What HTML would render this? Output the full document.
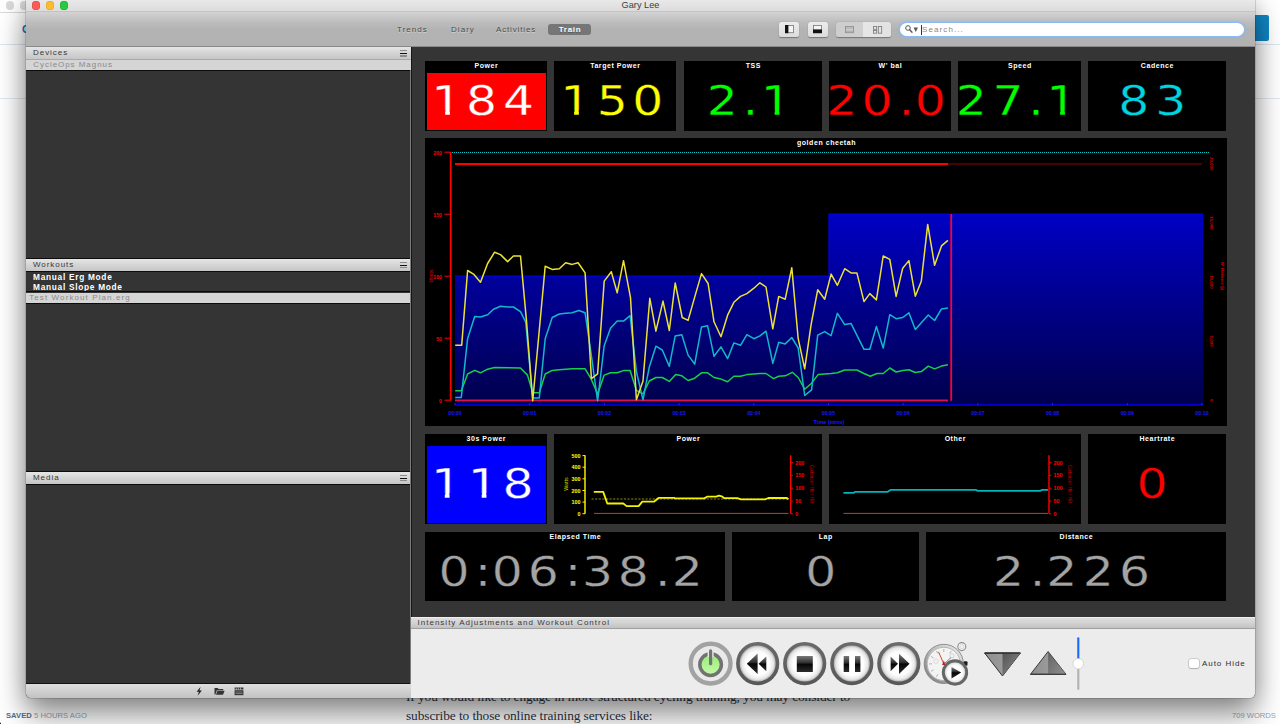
<!DOCTYPE html>
<html lang="en">
<head>
<meta charset="utf-8">
<title>Gary Lee</title>
<style>
*{box-sizing:border-box;margin:0;padding:0}
html,body{width:1280px;height:724px;overflow:hidden;background:#fff}
body{position:relative;font-family:"Liberation Sans",sans-serif;font-size:8px;color:#222}
.abs{position:absolute}
svg{display:block;overflow:visible}
svg text{font-family:"Liberation Sans",sans-serif}
/* background page */
#bgpage{position:absolute;left:0;top:0;width:1280px;height:724px;background:#fff}
#bgpage .ln{position:absolute;left:0;height:1px;background:#d5dde8}
#serif1,#serif2{position:absolute;left:406px;font-family:"Liberation Serif",serif;font-size:13.4px;color:#2b3245;white-space:nowrap;letter-spacing:-.1px}
#saved{position:absolute;left:6px;top:710.5px;font-size:7.6px;letter-spacing:.05px;color:#93a5bb;white-space:nowrap}
#saved b{color:#4f6f90}
#words{position:absolute;left:1232px;top:710.5px;font-size:7.6px;color:#93a5bb;white-space:nowrap}
/* window */
#win{position:absolute;left:26px;top:0;width:1229px;height:698px;background:#353535;border-radius:0 0 4.5px 4.5px;box-shadow:0 0 0 .5px rgba(0,0,0,.25),0 18px 30px rgba(0,0,0,.40),0 0 22px rgba(0,0,0,.22);overflow:hidden}
#titlebar{position:absolute;left:0;top:0;width:100%;height:12px;background:linear-gradient(#e9e9e9,#dcdcdc);border-bottom:1px solid #c4c4c4}
#title{position:absolute;left:0;width:100%;top:-.6px;text-align:center;font-size:9.2px;color:#3c3c3c;line-height:12px}
.tl{position:absolute;top:1px;width:8.6px;height:8.6px;border-radius:50%}
#toolbar{position:absolute;left:0;top:12px;width:100%;height:35px;background:linear-gradient(#d3d3d3 0,#bdbdbd 30%,#b3b3b3 52%,#b2b2b2 100%);border-bottom:1px solid #8a8a8a}
.tab{position:absolute;top:13px;font-size:8px;letter-spacing:1.05px;color:#4a4a4a;text-shadow:0 1px 0 rgba(255,255,255,.45);line-height:9px;white-space:nowrap}
#train{position:absolute;left:522px;top:12px;width:43px;height:11px;border-radius:3px;background:#767676;color:#fff;font-weight:bold;font-size:8px;letter-spacing:.7px;text-align:center;line-height:11.6px;text-shadow:0 1px 0 rgba(0,0,0,.3);padding-left:1px}
.tbtn{position:absolute;top:10px;height:15px;border-radius:2.5px;background:linear-gradient(#ececec,#dcdcdc);box-shadow:0 .5px 1px rgba(0,0,0,.35)}
#search{position:absolute;left:873.5px;top:10.5px;width:344px;height:13.6px;border-radius:7px;background:#fff;box-shadow:0 0 0 1px #8cbaf4,0 0 2.5px 1.5px rgba(130,180,245,.55)}
#search span{position:absolute;left:22.5px;top:2.2px;font-size:8px;letter-spacing:1.1px;color:#8a8a8a;line-height:9px}
/* left panel */
#left{position:absolute;left:0;top:47px;width:385px;height:651px;background:#343434}
.hdr{position:absolute;left:0;width:385px;background:linear-gradient(#e6e6e6,#d6d6d6 45%,#c6c6c6);font-size:8px;letter-spacing:.95px;color:#383838;padding-left:7px;white-space:nowrap}
.row{position:absolute;left:0;width:385px;background:#d5d5d5;font-size:8px;letter-spacing:.95px;color:#8a8a8a;white-space:nowrap}
.brow{position:absolute;left:7px;color:#fff;font-weight:bold;font-size:8.3px;letter-spacing:.72px;white-space:nowrap;line-height:10px}
.burger{position:absolute;left:374px;width:7px;height:6.5px}
.burger i{position:absolute;left:0;width:7px;height:1.3px;background:#8c8c8c}
#lfoot{position:absolute;left:0;top:636px;width:385px;height:15px;background:linear-gradient(#dedede,#c2c2c2);border-top:1px solid #111}
/* main */
#main{position:absolute;left:385px;top:47px;width:844px;height:651px;background:#353535;border-left:1.3px solid #161616}
.tile{position:absolute;background:#000}
.tile .lab{position:absolute;left:0;width:100%;top:.2px;text-align:center;color:#fff;font-weight:bold;font-size:7px;letter-spacing:.55px;line-height:9px;white-space:nowrap;padding-left:.7px}
.tile .fill{position:absolute}
.big{font-family:"DejaVu Sans","Liberation Sans",sans-serif;text-anchor:start}
.xt{font-size:5.2px;fill:#1818ff;text-anchor:middle;font-weight:bold}
.yt{font-size:5.2px;fill:#ff0000;text-anchor:end;font-weight:bold}
.yl{font-size:5.2px;fill:#e00000;text-anchor:middle}
.rl{font-size:4.4px;fill:#d80000;text-anchor:middle;font-weight:bold}
.ttl{font-size:7px;fill:#fff;font-weight:bold;text-anchor:middle;letter-spacing:.55px}
.myt{font-size:5.4px;fill:#ffff00;text-anchor:end;font-weight:bold}
.myl{font-size:5.4px;fill:#c8c800;text-anchor:middle}
.mrt{font-size:5.4px;fill:#ff0000;text-anchor:start;font-weight:bold}
.mrl{font-size:4.5px;fill:#d00000;text-anchor:middle}
/* controls */
#ctlhdr{position:absolute;left:385px;top:617px;width:844px;height:12px;background:linear-gradient(#dedede,#d2d2d2 50%,#c2c2c2);border-top:1px solid #efefef;border-bottom:1px solid #a0a0a0;font-size:8px;letter-spacing:1.01px;color:#383838;padding-left:6.5px;line-height:10px;white-space:nowrap}
#ctl{position:absolute;left:385px;top:629px;width:844px;height:69px;background:#ececec}
#autohide{position:absolute;left:791px;top:29.5px;font-size:8px;letter-spacing:.95px;color:#2e2e2e;line-height:10px;white-space:nowrap}
#chk{position:absolute;left:778px;top:29.5px;width:9.5px;height:9.5px;border-radius:2px;background:#fff;box-shadow:0 0 0 .6px #b4b4b4,0 .5px 1px rgba(0,0,0,.25)}
</style>
</head>
<body>
<div id="bgpage">
  <div class="ln" style="top:11.5px;width:40px;background:#d9d9d9"></div>
  <div class="ln" style="top:44px;width:1280px;background:#dde5f0"></div>
  <div class="ln" style="top:98px;width:1280px;background:#e3e8ef"></div>
  <div class="abs" style="left:5.7px;top:1px;width:8.6px;height:8.6px;border-radius:50%;background:#d9d9d9"></div>
  <div class="abs" style="left:19.7px;top:1px;width:8.6px;height:8.6px;border-radius:50%;background:#d9d9d9"></div>
  <div class="abs" style="left:22px;top:23px;font-size:11px;font-weight:bold;color:#1177c2">C</div>
  <div class="abs" style="left:1250px;top:15px;width:18.5px;height:26px;border-radius:2px;background:#1186c5"></div>
  <div id="serif1" style="top:689px">If you would like to engage in more structured cycling training, you may consider to</div>
  <div id="serif2" style="top:708px">subscribe to those online training services like:</div>
  <div id="saved"><b>SAVED</b> 5 HOURS AGO</div>
  <div id="words">709 WORDS</div>
  <div class="abs" style="left:-4px;top:720.5px;width:8px;height:8px;background:radial-gradient(circle at 100% 0,rgba(0,0,0,0) 0,rgba(0,0,0,0) 3.6px,#111 4.4px)"></div>
</div>

<div id="win">
  <div id="titlebar">
    <div class="tl" style="left:5.7px;background:#fc5b57;box-shadow:inset 0 0 0 .5px #e0443e"></div>
    <div class="tl" style="left:19.7px;background:#fdbc2e;box-shadow:inset 0 0 0 .5px #dea123"></div>
    <div class="tl" style="left:33.7px;background:#28c83f;box-shadow:inset 0 0 0 .5px #1aab29"></div>
    <div id="title">Gary Lee</div>
  </div>
  <div id="toolbar">
    <div class="tab" style="left:371px">Trends</div>
    <div class="tab" style="left:425px">Diary</div>
    <div class="tab" style="left:470px;letter-spacing:.85px">Activities</div>
    <div id="train">Train</div>
    <div class="tbtn" style="left:753px;width:20px">
      <svg class="abs" style="left:5.5px;top:3px" width="9" height="8.5"><rect x=".5" y=".5" width="8" height="7.2" fill="#f4f4f4" stroke="#777" stroke-width=".8"/><rect x="0" y="0" width="3.4" height="8.2" fill="#111"/></svg>
    </div>
    <div class="tbtn" style="left:781.5px;width:20px">
      <svg class="abs" style="left:5.5px;top:3px" width="9" height="8.5"><rect x=".5" y=".5" width="8" height="7.2" fill="#f4f4f4" stroke="#777" stroke-width=".8"/><rect x="0" y="4.4" width="9" height="3.8" fill="#111"/></svg>
    </div>
    <div class="tbtn" style="left:810px;width:55px;background:linear-gradient(90deg,#cdcdcd 0,#cfcfcf 26.5px,#b8b8b8 26.5px,#b8b8b8 27.2px,#e6e6e6 27.2px,#e2e2e2 100%)">
      <svg class="abs" style="left:8.5px;top:4px" width="9" height="7.5"><rect x=".5" y=".5" width="8" height="6.2" fill="none" stroke="#8a8a8a" stroke-width=".8"/><path d="M.5 2.1h8M.5 5.2h8" stroke="#8a8a8a" stroke-width=".6"/></svg>
      <svg class="abs" style="left:37px;top:3.5px" width="10" height="8"><rect x=".5" y=".5" width="3.2" height="2.8" fill="none" stroke="#777" stroke-width=".8"/><rect x=".5" y="4.4" width="3.2" height="2.8" fill="none" stroke="#777" stroke-width=".8"/><rect x="5.3" y=".5" width="3.4" height="6.7" fill="none" stroke="#777" stroke-width=".8"/></svg>
    </div>
    <div id="search">
      <svg class="abs" style="left:5.5px;top:2.8px" width="16" height="9"><circle cx="3" cy="3" r="2.3" fill="none" stroke="#555" stroke-width="1"/><path d="M4.7 4.8L7 7.3" stroke="#555" stroke-width="1.3" stroke-linecap="round"/><path d="M8.6 2.6h4.4l-2.2 4.4z" fill="#555"/></svg>
      <div class="abs" style="left:21.5px;top:2px;width:1px;height:10px;background:#333"></div>
      <span>Search...</span>
    </div>
  </div>

  <div id="left">
    <div class="hdr" style="top:0;height:11.5px;line-height:11.2px">Devices</div>
    <div class="burger" style="top:3.2px"><i style="top:0"></i><i style="top:2.6px;background:#111"></i><i style="top:5.2px"></i></div>
    <div class="abs" style="left:0;top:11.5px;width:385px;height:1.3px;background:#a9a9a9"></div>
    <div class="row" style="top:12.8px;height:10.2px;line-height:9px;padding-left:7.3px">CycleOps Magnus</div>
    <div class="abs" style="left:0;top:23px;width:385px;height:1px;background:#0c0c0c"></div>

    <div class="abs" style="left:0;top:210.5px;width:385px;height:1.5px;background:#0c0c0c"></div>
    <div class="hdr" style="top:212px;height:12px;line-height:12px">Workouts</div>
    <div class="burger" style="top:215px"><i style="top:0"></i><i style="top:2.6px;background:#111"></i><i style="top:5.2px"></i></div>
    <div class="abs" style="left:0;top:224px;width:385px;height:1px;background:#0c0c0c"></div>
    <div class="brow" style="top:225.2px">Manual Erg Mode</div>
    <div class="brow" style="top:235px">Manual Slope Mode</div>
    <div class="abs" style="left:0;top:244.3px;width:385px;height:1.2px;background:#0c0c0c"></div>
    <div class="row" style="top:245.5px;height:10.3px;line-height:10px;padding-left:3.2px;letter-spacing:1.1px">Test Workout Plan.erg</div>
    <div class="abs" style="left:0;top:255.8px;width:385px;height:1px;background:#0c0c0c"></div>

    <div class="abs" style="left:0;top:423.5px;width:385px;height:1.5px;background:#0c0c0c"></div>
    <div class="hdr" style="top:425px;height:12.3px;line-height:12px">Media</div>
    <div class="burger" style="top:428px"><i style="top:0"></i><i style="top:2.6px;background:#111"></i><i style="top:5.2px"></i></div>
    <div class="abs" style="left:0;top:437.3px;width:385px;height:1px;background:#0c0c0c"></div>

    <div id="lfoot">
      <svg class="abs" style="left:168px;top:1.5px" width="50" height="11">
        <path d="M6.6 .8L2.6 5.8h2.3L3.6 9.8l4.3-5.4H5.5z" fill="#222"/>
        <path d="M20.5 2h3.2l.9 1h4.6v1.2h-6.3l-1.5 4.4h-.9z" fill="#333"/><path d="M23.4 4.8h7.2l-1.6 3.9h-7z" fill="#333"/>
        <rect x="40.6" y="4.2" width="8.8" height="5" fill="#333"/><path d="M40.6 1.6h8.8v1.9h-8.8z" fill="#333"/><path d="M42.3 1.6v1.9M44.4 1.6v1.9M46.5 1.6v1.9" stroke="#ddd" stroke-width=".6"/><path d="M41.5 6h7M41.5 7.6h7" stroke="#ccc" stroke-width=".5"/>
      </svg>
    </div>
  </div>
  <div class="abs" style="left:384.3px;top:70px;width:1px;height:614px;background:#7c7c7c"></div>
  <div id="main"></div>
</div>

<!-- page-coordinate overlays (inside window region) -->
<div class="tile" style="left:425px;top:61px;width:122px;height:69.5px"><div class="lab">Power</div><div class="fill" style="background:#ff0000;left:2px;top:12px;right:1px;bottom:1px"></div></div>
<div class="tile" style="left:554px;top:61px;width:122px;height:69.5px"><div class="lab">Target Power</div></div>
<div class="tile" style="left:684px;top:61px;width:138px;height:69.5px"><div class="lab">TSS</div></div>
<div class="tile" style="left:829px;top:61px;width:122px;height:69.5px"><div class="lab">W' bal</div></div>
<div class="tile" style="left:958px;top:61px;width:123px;height:69.5px"><div class="lab">Speed</div></div>
<div class="tile" style="left:1088px;top:61px;width:138px;height:69.5px"><div class="lab">Cadence</div></div>
<div class="tile" style="left:425px;top:434px;width:122px;height:90px"><div class="lab">30s Power</div><div class="fill" style="background:#0000ff;left:2px;top:12px;right:1px;bottom:1px"></div></div>
<div class="tile" style="left:554px;top:434px;width:268px;height:90px"><div class="lab">Power</div></div>
<div class="tile" style="left:829px;top:434px;width:252px;height:90px"><div class="lab">Other</div></div>
<div class="tile" style="left:1088px;top:434px;width:138px;height:90px"><div class="lab">Heartrate</div></div>
<div class="tile" style="left:425px;top:532px;width:300px;height:69px"><div class="lab">Elapsed Time</div></div>
<div class="tile" style="left:732px;top:532px;width:187px;height:69px"><div class="lab">Lap</div></div>
<div class="tile" style="left:926px;top:532px;width:300px;height:69px"><div class="lab">Distance</div></div>
<svg class="abs" style="left:425px;top:138px" width="802" height="288" viewBox="0 0 802 288">
<defs><linearGradient id="bg1" x1="0" y1="0" x2="0" y2="1"><stop offset="0" stop-color="#0000c4"/><stop offset="1" stop-color="#00004c"/></linearGradient></defs>
<rect width="802" height="288" fill="#000"/>
<path d="M30.0 138.0 H404.0 V76.0 H778.0 V266.5 H30.0 Z" fill="url(#bg1)"/>
<path d="M30.0 138.0 H404.0 V76.0 H778.0" fill="none" stroke="#0000f0" stroke-width="1.2"/>
<path d="M30.0 267.0 H778.0" stroke="#0000ff" stroke-width="1.4"/>
<path d="M30.0 267.0 v-2" stroke="#2020ff" stroke-width="1"/>
<text x="30.0" y="277.0" class="xt">00:00</text>
<path d="M104.7 267.0 v-2" stroke="#2020ff" stroke-width="1"/>
<text x="104.7" y="277.0" class="xt">00:01</text>
<path d="M179.4 267.0 v-2" stroke="#2020ff" stroke-width="1"/>
<text x="179.4" y="277.0" class="xt">00:02</text>
<path d="M254.1 267.0 v-2" stroke="#2020ff" stroke-width="1"/>
<text x="254.1" y="277.0" class="xt">00:03</text>
<path d="M328.8 267.0 v-2" stroke="#2020ff" stroke-width="1"/>
<text x="328.8" y="277.0" class="xt">00:04</text>
<path d="M403.5 267.0 v-2" stroke="#2020ff" stroke-width="1"/>
<text x="403.5" y="277.0" class="xt">00:05</text>
<path d="M478.2 267.0 v-2" stroke="#2020ff" stroke-width="1"/>
<text x="478.2" y="277.0" class="xt">00:06</text>
<path d="M552.9 267.0 v-2" stroke="#2020ff" stroke-width="1"/>
<text x="552.9" y="277.0" class="xt">00:07</text>
<path d="M627.6 267.0 v-2" stroke="#2020ff" stroke-width="1"/>
<text x="627.6" y="277.0" class="xt">00:08</text>
<path d="M702.3 267.0 v-2" stroke="#2020ff" stroke-width="1"/>
<text x="702.3" y="277.0" class="xt">00:09</text>
<path d="M777.0 267.0 v-2" stroke="#2020ff" stroke-width="1"/>
<text x="777.0" y="277.0" class="xt">00:10</text>
<text x="404.0" y="286.0" class="xt" style="font-size:5.5px">Time (mins)</text>
<path d="M25.7 14.0 V262.5" stroke="#ff0000" stroke-width="1.8"/>
<path d="M19.5 262.2 H25.7" stroke="#ff0000" stroke-width="1"/>
<text x="17.0" y="264.9" class="yt">0</text>
<path d="M19.5 200.2 H25.7" stroke="#ff0000" stroke-width="1"/>
<text x="17.0" y="202.9" class="yt">50</text>
<path d="M19.5 138.2 H25.7" stroke="#ff0000" stroke-width="1"/>
<text x="17.0" y="140.9" class="yt">100</text>
<path d="M19.5 76.2 H25.7" stroke="#ff0000" stroke-width="1"/>
<text x="17.0" y="78.9" class="yt">150</text>
<path d="M19.5 14.2 H25.7" stroke="#ff0000" stroke-width="1"/>
<text x="17.0" y="16.9" class="yt">200</text>
<text transform="translate(8.0 138.0) rotate(-90)" class="yl">Watts</text>
<text transform="translate(785.0 262.2) rotate(90)" class="rl">0</text>
<text transform="translate(785.0 203.1) rotate(90)" class="rl">5,000</text>
<text transform="translate(785.0 143.9) rotate(90)" class="rl">10,000</text>
<text transform="translate(785.0 84.8) rotate(90)" class="rl">15,000</text>
<text transform="translate(785.0 25.7) rotate(90)" class="rl">20,000</text>
<text transform="translate(795.5 138.0) rotate(90)" class="rl">W' Balance (j)</text>
<path d="M27.0 14.5 H784.0" stroke="#00c8c8" stroke-width="1" stroke-dasharray="1 1"/>
<path d="M30.0 26.0 H523.0" stroke="#ff0000" stroke-width="2"/>
<path d="M523.0 26.0 H777.0" stroke="#600000" stroke-width="1.6"/>
<path d="M30.0 262.3 H523.0" stroke="#e0104c" stroke-width="1.8"/>
<polyline points="30.2,252.8 36.3,252.8 42.6,236.0 49.7,232.4 55.5,234.8 62.6,231.2 69.6,229.6 95.5,230.0 102.5,237.1 107.7,254.7 114.3,254.7 120.2,236.0 127.2,232.4 134.3,231.7 147.2,230.8 160.1,230.8 166.0,240.6 172.6,256.0 179.2,237.1 185.6,234.8 192.2,234.8 198.5,232.6 205.1,232.6 211.4,252.4 218.0,255.9 224.3,243.0 230.9,239.5 237.3,239.5 244.3,243.4 250.7,236.4 256.8,237.8 263.1,242.5 269.7,240.2 276.5,234.8 282.6,234.8 289.0,239.5 296.0,241.1 302.6,243.7 308.9,238.3 315.5,238.3 321.9,236.6 328.9,235.9 334.9,235.5 341.0,235.5 348.5,240.6 353.7,238.3 360.2,237.8 367.3,234.3 373.2,239.5 379.7,251.2 386.6,245.3 393.1,236.6 406.1,235.5 412.4,234.8 419.7,232.0 431.9,232.0 439.0,235.5 445.3,238.3 451.9,235.5 458.2,235.5 464.8,230.0 471.1,234.0 477.7,232.4 483.9,231.7 490.3,234.5 496.3,233.6 503.3,228.1 509.6,230.9 516.5,228.1 522.9,226.7" fill="none" stroke="#16d048" stroke-width="1.5" stroke-linejoin="round"/>
<polyline points="30.2,259.4 36.3,259.4 42.6,200.7 49.7,178.4 55.5,179.0 62.6,176.7 68.5,171.3 75.5,168.3 82.6,169.0 88.4,169.0 95.5,173.7 100.7,184.2 107.7,259.9 114.3,259.9 120.2,200.7 127.2,179.5 134.3,176.0 140.6,175.3 147.2,174.8 153.8,172.5 160.1,174.8 166.0,214.8 172.6,263.0 179.2,207.7 185.6,190.1 192.2,183.1 198.5,183.1 205.1,177.7 211.4,233.6 218.0,261.8 224.3,228.9 230.9,208.2 237.3,212.0 244.3,228.4 250.2,197.9 256.8,196.7 263.1,217.1 269.7,226.1 276.5,188.9 282.6,187.8 289.0,218.3 296.0,208.9 302.6,220.7 308.9,204.9 315.5,207.3 321.9,196.7 328.9,200.7 334.9,197.9 341.0,193.2 347.8,225.4 353.7,204.2 360.2,205.9 366.8,199.5 373.2,210.1 379.7,257.5 386.6,251.9 392.7,197.2 399.7,193.6 406.1,197.6 412.4,175.3 419.7,186.6 426.0,185.4 439.0,211.3 444.8,211.3 451.4,188.5 458.2,210.1 464.8,176.7 471.1,180.7 477.7,179.5 483.9,174.8 490.3,191.4 496.3,184.7 503.3,177.0 509.6,182.5 516.5,170.9 522.9,170.1" fill="none" stroke="#12b8c8" stroke-width="1.5" stroke-linejoin="round"/>
<polyline points="30.2,207.3 36.7,207.3 42.6,132.5 48.5,136.1 55.5,144.3 62.6,125.5 69.6,114.2 75.5,116.6 82.6,123.6 88.4,118.0 95.5,118.0 101.4,181.9 107.7,263.0 120.2,128.3 127.2,131.4 134.3,130.7 140.6,124.8 147.2,126.4 153.1,124.8 160.1,134.9 166.4,240.6 172.6,235.9 179.2,143.1 186.3,133.7 192.2,154.9 198.5,122.7 205.5,159.6 211.4,261.8 218.0,243.0 224.8,160.3 230.9,193.2 238.0,163.1 244.3,192.5 250.2,145.0 257.2,179.5 263.1,182.4 269.7,159.1 276.5,135.6 283.1,145.5 289.0,183.8 296.0,198.8 302.6,177.2 308.9,164.3 315.5,158.4 321.9,155.6 328.9,150.2 334.9,144.8 341.0,149.0 347.8,190.8 353.7,158.4 360.2,161.2 366.8,129.7 373.2,200.7 379.7,230.8 386.1,186.6 392.7,151.8 399.7,161.2 406.1,136.1 412.4,147.3 419.7,130.7 426.0,134.9 431.9,134.9 439.0,163.6 444.8,155.6 451.4,161.9 458.2,118.0 464.8,121.3 471.1,158.4 477.7,130.2 483.9,122.6 490.3,158.2 496.3,143.3 502.7,86.4 509.6,127.3 516.5,107.9 522.9,102.4" fill="none" stroke="#ece236" stroke-width="1.5" stroke-linejoin="round"/>
<path d="M526.2 76.0 V262.8" stroke="#ff0030" stroke-width="1.8"/>
<text x="401.5" y="7.3" class="ttl">golden cheetah</text>
</svg>
<svg class="abs" style="left:554px;top:434px" width="268" height="90" viewBox="554 434 268 90">
<path d="M585 455.3V513.8" stroke="#ffff00" stroke-width="1.4"/>
<path d="M582.5 455.6H585" stroke="#ffff00" stroke-width="1"/>
<text x="580.5" y="457.6" class="myt">500</text>
<path d="M582.5 467.2H585" stroke="#ffff00" stroke-width="1"/>
<text x="580.5" y="469.2" class="myt">400</text>
<path d="M582.5 478.8H585" stroke="#ffff00" stroke-width="1"/>
<text x="580.5" y="480.8" class="myt">300</text>
<path d="M582.5 490.5H585" stroke="#ffff00" stroke-width="1"/>
<text x="580.5" y="492.5" class="myt">200</text>
<path d="M582.5 502.1H585" stroke="#ffff00" stroke-width="1"/>
<text x="580.5" y="504.1" class="myt">100</text>
<path d="M582.5 513.7H585" stroke="#ffff00" stroke-width="1"/>
<text x="580.5" y="515.7" class="myt">0</text>
<text transform="translate(567.5 484) rotate(-90)" class="myl">Watts</text>
<path d="M790.7 455.3V513.8" stroke="#ff0000" stroke-width="1.4"/><path d="M790.7 462.6h2.2" stroke="#ff0000" stroke-width="1"/><text x="795.2" y="464.6" class="mrt">200</text><path d="M790.7 475.4h2.2" stroke="#ff0000" stroke-width="1"/><text x="795.2" y="477.4" class="mrt">150</text><path d="M790.7 488.2h2.2" stroke="#ff0000" stroke-width="1"/><text x="795.2" y="490.2" class="mrt">100</text><path d="M790.7 501.0h2.2" stroke="#ff0000" stroke-width="1"/><text x="795.2" y="503.0" class="mrt">50</text><path d="M790.7 513.8h2.2" stroke="#ff0000" stroke-width="1"/><text x="795.2" y="515.8" class="mrt">0</text><text transform="translate(809.5 484) rotate(90)" class="mrl">Cadence / Hb / HR</text>
<path d="M591.5 499H789" stroke="#8a8a10" stroke-width="1" stroke-dasharray="2.2 1.4"/>
<path d="M594 513.4H788.5" stroke="#d04000" stroke-width="1"/>
<polyline points="593.8,491.9 603.2,491.9 607.3,503.5 623.3,503.5 626.6,506.1 638.6,506.1 642.3,501.7 653.9,501.7 658.9,497.8 674.0,497.8 675.1,498.4 704.2,498.4 707.1,496.7 716.3,496.7 718.9,495.6 721.7,496.3 724.4,498.2 737.5,498.2 740.8,499.3 765.5,499.3 768.3,498.0 786.7,498.0 788.5,499.3" fill="none" stroke="#f4f400" stroke-width="1.8" stroke-linejoin="round"/>
</svg>
<svg class="abs" style="left:829px;top:434px" width="252" height="90" viewBox="829 434 252 90">
<path d="M1049.0 455.3V513.8" stroke="#ff0000" stroke-width="1.4"/><path d="M1049.0 462.6h2.2" stroke="#ff0000" stroke-width="1"/><text x="1053.5" y="464.6" class="mrt">200</text><path d="M1049.0 475.4h2.2" stroke="#ff0000" stroke-width="1"/><text x="1053.5" y="477.4" class="mrt">150</text><path d="M1049.0 488.2h2.2" stroke="#ff0000" stroke-width="1"/><text x="1053.5" y="490.2" class="mrt">100</text><path d="M1049.0 501.0h2.2" stroke="#ff0000" stroke-width="1"/><text x="1053.5" y="503.0" class="mrt">50</text><path d="M1049.0 513.8h2.2" stroke="#ff0000" stroke-width="1"/><text x="1053.5" y="515.8" class="mrt">0</text><text transform="translate(1067.8 484) rotate(90)" class="mrl">Cadence / Hb / HR</text>
<path d="M843.4 513.4H1048" stroke="#d04000" stroke-width="1"/>
<polyline points="843.4,492.8 853.9,492.8 855.0,491.9 887.4,491.9 890.4,489.9 975.8,489.9 977.5,490.8 1040.5,490.8 1042.1,489.9 1048.0,489.9" fill="none" stroke="#00b4bc" stroke-width="1.8" stroke-linejoin="round"/>
</svg>
<svg class="abs" style="left:425px;top:61px" width="122" height="69"><text transform="scale(1.22 1)" x="5.11 33.51 63.94" y="53.9" fill="#fff" stroke="#ff0000" stroke-width="0.35" class="big" style="font-size:40.0px">184</text><rect x="11.11" y="48.98" width="9.04" height="5.92" fill="#ff0000"/><rect x="24.91" y="48.98" width="9.14" height="5.92" fill="#ff0000"/></svg>
<svg class="abs" style="left:554px;top:61px" width="122" height="69"><text transform="scale(1.22 1)" x="5.06 35.14 64.17" y="53.9" fill="#ffff00" stroke="#000" stroke-width="0.35" class="big" style="font-size:40.0px">150</text><rect x="11.06" y="48.98" width="9.04" height="5.92" fill="#000"/><rect x="24.86" y="48.98" width="9.14" height="5.92" fill="#000"/></svg>
<svg class="abs" style="left:684px;top:61px" width="138" height="69"><text transform="scale(1.22 1)" x="18.60 48.09 62.89" y="53.9" fill="#00ff00" stroke="#000" stroke-width="0.35" class="big" style="font-size:40.0px">2.1</text><rect x="81.61" y="48.98" width="9.04" height="5.92" fill="#000"/><rect x="95.41" y="48.98" width="9.14" height="5.92" fill="#000"/></svg>
<svg class="abs" style="left:829px;top:61px" width="122" height="69"><text transform="scale(1.22 1)" x="-2.30 26.69 56.94 70.28" y="53.9" fill="#ff0000" stroke="#000" stroke-width="0.35" class="big" style="font-size:40.0px">20.0</text></svg>
<svg class="abs" style="left:958px;top:61px" width="123" height="69"><text transform="scale(1.22 1)" x="-1.89 28.32 57.59 72.28" y="53.9" fill="#00ff00" stroke="#000" stroke-width="0.35" class="big" style="font-size:40.0px">27.1</text><rect x="93.06" y="48.98" width="9.04" height="5.92" fill="#000"/><rect x="106.86" y="48.98" width="9.14" height="5.92" fill="#000"/></svg>
<svg class="abs" style="left:1088px;top:61px" width="138" height="69"><text transform="scale(1.22 1)" x="24.90 55.19" y="53.9" fill="#00d4e0" stroke="#000" stroke-width="0.35" class="big" style="font-size:40.0px">83</text></svg>
<svg class="abs" style="left:425px;top:434px" width="122" height="90"><text transform="scale(1.22 1)" x="4.82 35.06 63.43" y="64.2" fill="#fff" stroke="#0000ff" stroke-width="0.35" class="big" style="font-size:40.0px">118</text><rect x="10.76" y="59.28" width="9.04" height="5.92" fill="#0000ff"/><rect x="24.56" y="59.28" width="9.14" height="5.92" fill="#0000ff"/><rect x="47.66" y="59.28" width="9.04" height="5.92" fill="#0000ff"/><rect x="61.46" y="59.28" width="9.14" height="5.92" fill="#0000ff"/></svg>
<svg class="abs" style="left:1088px;top:434px" width="138" height="90"><text transform="scale(1.22 1)" x="39.75" y="64.2" fill="#ff0000" stroke="#000" stroke-width="0.35" class="big" style="font-size:40.0px">0</text></svg>
<svg class="abs" style="left:425px;top:532px" width="300" height="69"><text transform="scale(1.22 1)" x="11.10 40.72 54.79 84.15 114.49 128.63 158.06 188.54 202.29" y="53.9" fill="#a4a4a4" stroke="#000" stroke-width="0.35" class="big" style="font-size:40.0px">0:06:38.2</text></svg>
<svg class="abs" style="left:732px;top:532px" width="187" height="69"><text transform="scale(1.22 1)" x="59.95" y="53.9" fill="#a4a4a4" stroke="#000" stroke-width="0.35" class="big" style="font-size:40.0px">0</text></svg>
<svg class="abs" style="left:926px;top:532px" width="300" height="69"><text transform="scale(1.22 1)" x="54.95 85.01 98.60 128.52 158.16" y="53.9" fill="#a4a4a4" stroke="#000" stroke-width="0.35" class="big" style="font-size:40.0px">2.226</text></svg>

<div id="win2" class="abs" style="left:26px;top:0;width:1229px;height:698px;overflow:hidden;border-radius:0 0 4.5px 4.5px;pointer-events:none">
  <div id="ctlhdr">Intensity Adjustments and Workout Control</div>
  <div id="ctl">
    <svg class="abs" style="left:0;top:0" width="844" height="69" viewBox="411 629 844 69">
<defs>
<radialGradient id="bw" cx=".5" cy=".5" r=".5"><stop offset="0" stop-color="#fff"/><stop offset=".6" stop-color="#fdfdfd"/><stop offset=".8" stop-color="#e6e6e6"/><stop offset=".9" stop-color="#b4b4b4"/><stop offset="1" stop-color="#808080"/></radialGradient>
<linearGradient id="ring" x1="0" y1="0" x2="0" y2="1"><stop offset="0" stop-color="#6a6a6a"/><stop offset="1" stop-color="#585858"/></linearGradient>
<linearGradient id="blk" x1="0" y1="0" x2="0" y2="1"><stop offset="0" stop-color="#7a7a7a"/><stop offset=".45" stop-color="#2a2a2a"/><stop offset=".5" stop-color="#050505"/><stop offset="1" stop-color="#2c2c2c"/></linearGradient>
<linearGradient id="blkh" x1="0" y1="0" x2="1" y2="0"><stop offset="0" stop-color="#111"/><stop offset="1" stop-color="#333"/></linearGradient>
<linearGradient id="grn" x1="0" y1="0" x2="0" y2="1"><stop offset="0" stop-color="#96ee72"/><stop offset="1" stop-color="#c6f7ae"/></linearGradient>
<linearGradient id="tdl" x1="0" y1="0" x2="1" y2="0"><stop offset="0" stop-color="#8e8e8e"/><stop offset="1" stop-color="#a6a6a6"/></linearGradient>
<linearGradient id="tdr" x1="0" y1="0" x2="1" y2="1"><stop offset="0" stop-color="#555"/><stop offset="1" stop-color="#8c8c8c"/></linearGradient>
<linearGradient id="sw" x1="1" y1="0" x2="0" y2="1"><stop offset="0" stop-color="#ededed"/><stop offset=".45" stop-color="#bdbdbd"/><stop offset="1" stop-color="#7c7c7c"/></linearGradient>
</defs>
<!-- power -->
<g>
<circle cx="710.6" cy="663.6" r="19.9" fill="#e9e9e9" stroke="#a2a2a2" stroke-width="4.4"/>
<circle cx="710.6" cy="664.6" r="10.8" fill="url(#grn)" stroke="#727272" stroke-width="3.5"/>
<rect x="707.6" y="648" width="6" height="9" fill="#e9e9e9"/>
<rect x="709" y="649.3" width="3.2" height="16" rx="1.6" fill="#727272"/>
</g>
<!-- rewind -->
<g>
<circle cx="757.7" cy="663.6" r="19.8" fill="url(#bw)" stroke="url(#ring)" stroke-width="3.6"/>
<path d="M746.8 663.7L757.6 653.6V673.9z" fill="url(#blk)"/>
<path d="M758.6 663.7L766.3 656.4V671.2z" fill="url(#blk)"/>
</g>
<!-- stop -->
<g>
<circle cx="804.7" cy="663.6" r="19.8" fill="url(#bw)" stroke="url(#ring)" stroke-width="3.6"/>
<rect x="796.8" y="656" width="16" height="16" fill="url(#blk)"/>
</g>
<!-- pause -->
<g>
<circle cx="851.8" cy="663.6" r="19.8" fill="url(#bw)" stroke="url(#ring)" stroke-width="3.6"/>
<rect x="843.7" y="656" width="5.4" height="16" fill="url(#blk)"/>
<rect x="855" y="656" width="5.4" height="16" fill="url(#blk)"/>
</g>
<!-- ff -->
<g>
<circle cx="898.8" cy="663.6" r="19.8" fill="url(#bw)" stroke="url(#ring)" stroke-width="3.6"/>
<path d="M898 663.8L890.6 656.5V671.2z" fill="url(#blk)"/>
<path d="M909.5 663.8L899 653.7V674z" fill="url(#blk)"/>
</g>
<!-- stopwatch -->
<g>
<circle cx="961.8" cy="646.6" r="4" fill="#f4f4f4" stroke="#8c8c8c" stroke-width="1.1"/><circle cx="961.8" cy="646.6" r="2" fill="none" stroke="#c4c4c4" stroke-width=".6"/>
<path d="M956.5 650.5l3 3" stroke="#aaa" stroke-width="2.4"/>
<rect x="963.5" y="661.3" width="4" height="4.4" rx="1" fill="#1c1c1c"/>
<circle cx="943.8" cy="663.9" r="18.2" fill="#f3f3f3" stroke="url(#sw)" stroke-width="2.6"/>
<circle cx="943.8" cy="663.9" r="19.6" fill="none" stroke="#7a7a7a" stroke-width=".8"/>
<circle cx="943.8" cy="663.9" r="16.6" fill="none" stroke="#9c9c9c" stroke-width=".7"/>
<g stroke="#9a9a9a" stroke-width=".7"><path d="M943.8 649v3M929 663.9h3M936.4 651l1.5 2.6M931 656.5l2.6 1.5M931 671.3l2.6-1.5M936.4 676.8l1.5-2.6M951.2 651l-1.5 2.6"/></g>
<circle cx="936" cy="661.2" r="2.3" fill="none" stroke="#d8c8c0" stroke-width=".6"/>
<circle cx="952" cy="655.8" r="2.1" fill="none" stroke="#bbb" stroke-width=".6"/>
<path d="M943.9 664L938.5 651.8" stroke="#c0391c" stroke-width=".9"/>
<path d="M943.8 660.5l1.9 4.6h-3.6z" fill="#c81414"/>
<path d="M944 664l7-6.5" stroke="#666" stroke-width=".8"/>
<circle cx="955" cy="672.5" r="11.7" fill="url(#bw)" stroke="#666" stroke-width="2.9"/>
<path d="M961.2 672.6L951.5 667V678.4z" fill="url(#blk)"/>
</g>
<!-- down / up triangles -->
<g>
<path d="M984.6 653H1020.4L1002.5 676z" fill="url(#tdl)" stroke="#1e1e1e" stroke-width=".9" stroke-linejoin="round"/>
<path d="M1002.5 653H1020.4L1002.5 676z" fill="url(#tdr)"/>
<path d="M984.6 653H1020.4" stroke="#111" stroke-width="1.2"/>
<path d="M1030.5 674.3L1048.1 651.5L1066 674.3z" fill="url(#tdl)" stroke="#2a2a2a" stroke-width=".9" stroke-linejoin="round"/>
<path d="M1048.1 651.5L1066 674.3H1048.1z" fill="url(#tdr)" opacity=".8"/>
<path d="M1030.5 674.3H1066" stroke="#333" stroke-width="1.1"/>
</g>
<!-- slider -->
<g>
<path d="M1078.3 638.3V660" stroke="#166bff" stroke-width="2.1" stroke-linecap="round"/>
<path d="M1078.3 668V689" stroke="#b2b2b2" stroke-width="2.1" stroke-linecap="round"/>
<circle cx="1078.3" cy="663.7" r="5.3" fill="#fff" stroke="#c9c9c9" stroke-width=".7"/>
</g>
</svg>

    <div id="chk"></div>
    <div id="autohide">Auto Hide</div>
  </div>
</div>
</body>
</html>
